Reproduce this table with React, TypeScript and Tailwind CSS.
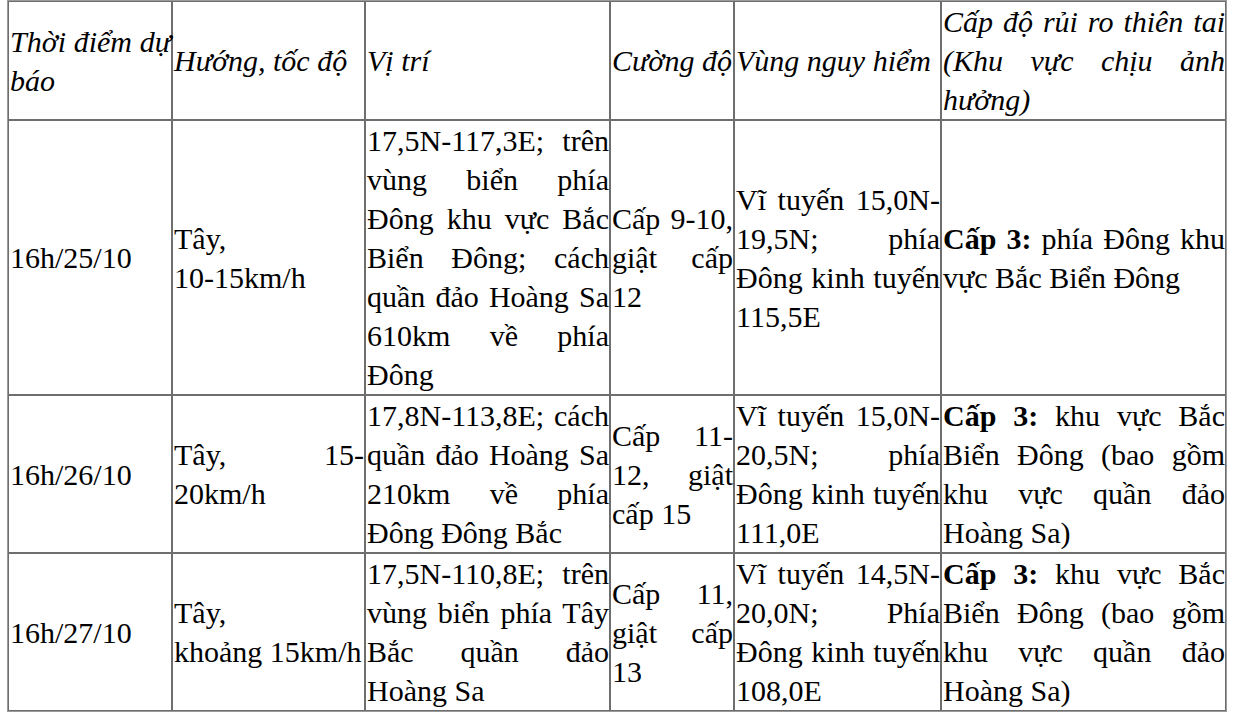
import type { ReactNode } from 'react'

const cell = 'border border-[#6e6e6e] pl-px py-0 align-middle text-justify'

const rows: { time: string; dir: ReactNode; pos: string; power: string; zone: string; risk: string }[] = [
  {
    time: '16h/25/10',
    dir: <>Tây, <span className="whitespace-nowrap">10-15km/h</span></>,
    pos: '17,5N-117,3E; trên vùng biển phía Đông khu vực Bắc Biển Đông; cách quần đảo Hoàng Sa 610km về phía Đông',
    power: 'Cấp 9-10, giật cấp 12',
    zone: 'Vĩ tuyến 15,0N-19,5N; phía Đông kinh tuyến 115,5E',
    risk: 'phía Đông khu vực Bắc Biển Đông',
  },
  {
    time: '16h/26/10',
    dir: 'Tây, 15-20km/h',
    pos: '17,8N-113,8E; cách quần đảo Hoàng Sa 210km về phía Đông Đông Bắc',
    power: 'Cấp 11-12, giật cấp 15',
    zone: 'Vĩ tuyến 15,0N-20,5N; phía Đông kinh tuyến 111,0E',
    risk: 'khu vực Bắc Biển Đông (bao gồm khu vực quần đảo Hoàng Sa)',
  },
  {
    time: '16h/27/10',
    dir: <>Tây, <span className="whitespace-nowrap">khoảng 15km/h</span></>,
    pos: '17,5N-110,8E; trên vùng biển phía Tây Bắc quần đảo Hoàng Sa',
    power: 'Cấp 11, giật cấp 13',
    zone: 'Vĩ tuyến 14,5N-20,0N; Phía Đông kinh tuyến 108,0E',
    risk: 'khu vực Bắc Biển Đông (bao gồm khu vực quần đảo Hoàng Sa)',
  },
]

export default function App() {
  return (
    <div className="min-h-screen bg-white pl-[7px] text-black" style={{ fontFamily: '"Liberation Serif", "Times New Roman", serif' }}>
      <table className="table-fixed border-separate border-spacing-0 border border-[#9a9a9a] text-[30px] leading-[39px] w-[1220px]">
        <colgroup>
          <col className="w-[164px]" />
          <col className="w-[193px]" />
          <col className="w-[245px]" />
          <col className="w-[124px]" />
          <col className="w-[207px]" />
          <col className="w-[285px]" />
        </colgroup>
        <thead>
          <tr className="italic">
            <td className={cell}>Thời điểm dự báo</td>
            <td className={cell}>Hướng, tốc độ</td>
            <td className={cell}>Vị trí</td>
            <td className={cell}>Cường độ</td>
            <td className={cell}>Vùng nguy hiểm</td>
            <td className={cell}>Cấp độ rủi ro thiên tai (Khu vực chịu ảnh hưởng)</td>
          </tr>
        </thead>
        <tbody>
          {rows.map((r) => (
            <tr key={r.time}>
              <td className={cell}>{r.time}</td>
              <td className={cell}>{r.dir}</td>
              <td className={cell}>{r.pos}</td>
              <td className={cell}>{r.power}</td>
              <td className={cell}>{r.zone}</td>
              <td className={cell}>
                <b>Cấp 3:</b> {r.risk}
              </td>
            </tr>
          ))}
        </tbody>
      </table>
    </div>
  )
}
